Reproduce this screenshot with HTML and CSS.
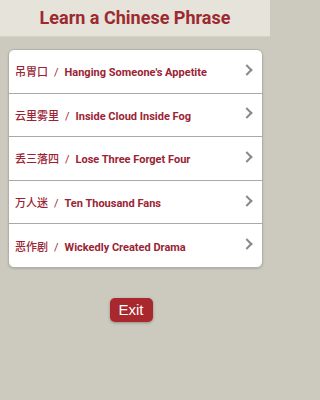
FILE: index.html
```html
<!DOCTYPE html>
<html>
<head>
<meta charset="utf-8">
<link rel="stylesheet" href="styles.css">
</head>
<body>
<div class="page">
<header class="top">
  <h1 class="title">Learn a Chinese Phrase</h1>
</header>
<main class="content">
  <ul class="list">
    <li class="row"><span class="label"><span class="zh">吊胃口</span><span class="sep">/</span>Hanging Someone's Appetite</span><span class="chev"></span></li>
    <li class="row"><span class="label"><span class="zh">云里雾里</span><span class="sep">/</span>Inside Cloud Inside Fog</span><span class="chev"></span></li>
    <li class="row"><span class="label"><span class="zh">丢三落四</span><span class="sep">/</span>Lose Three Forget Four</span><span class="chev"></span></li>
    <li class="row"><span class="label"><span class="zh">万人迷</span><span class="sep">/</span>Ten Thousand Fans</span><span class="chev"></span></li>
    <li class="row"><span class="label"><span class="zh">恶作剧</span><span class="sep">/</span>Wickedly Created Drama</span><span class="chev"></span></li>
  </ul>
  <div class="actions">
    <button class="exit">Exit</button>
  </div>
</main>
</div>
</body>
</html>
```
FILE: styles.css
```css
html, body {
  margin: 0;
  padding: 0;
  height: 100%;
  background: #ccc9be;
}
body {
  font-family: Roboto, "Noto Sans CJK SC", sans-serif;
}
.page {
  width: 270px;
  min-height: 400px;
  background: #ccc9be;
}
.top {
  background: #e6e3da;
  height: 36px;
  display: flex;
  align-items: center;
  justify-content: center;
  border-bottom: 1px solid #d4d1c7;
}
.title {
  margin: 0 0 2px 0;
  font-size: 18px;
  font-weight: bold;
  color: #9c2a30;
}
.content {
  padding: 12px 7px 0 8px;
}
.list {
  list-style: none;
  margin: 0;
  padding: 0;
  background: #fff;
  border: 1px solid #b3b0a8;
  border-radius: 6px;
  box-shadow: 0 1px 2px rgba(0,0,0,0.15);
  overflow: hidden;
}
.row {
  height: 42.6px;
  display: flex;
  align-items: center;
  justify-content: space-between;
  padding: 0 9px 0 6px;
  border-top: 1px solid #a9a9a9;
}
.row:first-child {
  border-top: none;
}
.label {
  color: #9b2434;
  font-size: 11px;
  font-weight: bold;
  white-space: nowrap;
}
.zh {
  font-family: "Noto Sans CJK SC", sans-serif;
  font-weight: 500;
}
.sep {
  margin: 0 6px;
  font-weight: normal;
  color: #9b2434;
}
.chev {
  width: 6px;
  height: 6px;
  border-right: 2px solid #8a8a8a;
  border-top: 2px solid #8a8a8a;
  transform: rotate(45deg);
  margin-right: 2px;
  margin-top: -3px;
}
.actions {
  display: flex;
  justify-content: center;
  padding-top: 30px;
}
.exit {
  background: #a8282d;
  color: #fff;
  border: none;
  border-radius: 5px;
  width: 43px;
  height: 24px;
  padding: 0;
  font-family: "Liberation Sans", Arial, sans-serif;
  font-size: 15px;
  box-shadow: 0 1px 3px rgba(0,0,0,0.3);
  margin-right: 9px;
}
```
